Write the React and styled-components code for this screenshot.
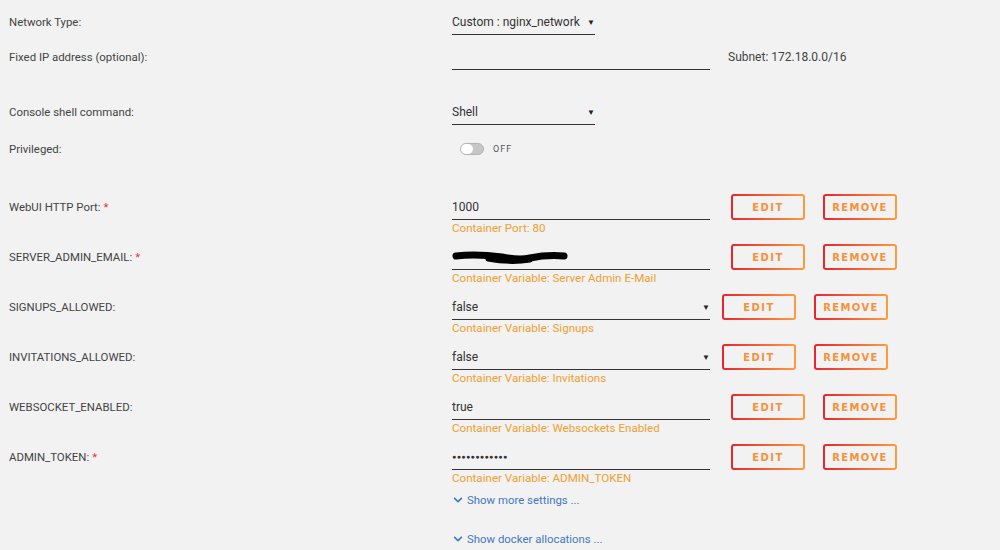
import styled, { createGlobalStyle } from "styled-components";
import { FaChevronDown } from "react-icons/fa";

// Container settings form: label column on the left, controls + action buttons on the right.

const GlobalStyle = createGlobalStyle`
  html, body {
    margin: 0;
    background: #f2f2f2;
  }
  body {
    font-family: Roboto, "Liberation Sans", Arial, sans-serif;
    font-size: 12px;
    color: #333;
  }
`;

const Page = styled.div`
  width: 1000px;
  height: 550px;
  overflow: hidden;
  padding: 10px 0 0 9px;
  box-sizing: border-box;
`;

// one form line: label + control area
const Row = styled.div`
  display: grid;
  grid-template-columns: 443px auto;
  align-items: start;
  margin-bottom: ${(p) => p.$mb || 0}px;
`;

const Label = styled.div`
  height: 24px;
  line-height: 24px;
  color: #444;
  font-size: 11.4px;
`;

const Required = styled.span`
  color: #e33;
  margin-left: 3px;
`;

const Controls = styled.div`
  display: flex;
  align-items: flex-start;
`;

const Field = styled.div`
  display: flex;
  flex-direction: column;
  width: ${(p) => p.$w || 258}px;
`;

const Input = styled.div`
  height: 24px;
  line-height: 24px;
  border-bottom: 1px solid #333;
  color: #333;
  display: flex;
  align-items: center;
  justify-content: space-between;
`;

const Arrow = styled.span`
  font-size: 8px;
  color: #222;
  margin-top: 1px;
`;

const Hint = styled.div`
  color: #f0a030;
  height: 14px;
  line-height: 14px;
  margin-top: 1px;
  font-size: 11.6px;
`;

const Subnet = styled.div`
  margin-left: 18px;
  line-height: 24px;
  color: #444;
`;

const Dots = styled.span`
  font-size: 7px;
  letter-spacing: 0.4px;
  color: #333;
`;

const Toggle = styled.div`
  display: flex;
  align-items: center;
  height: 24px;
  padding-left: 8px;
`;

const Track = styled.div`
  width: 24px;
  height: 12px;
  border-radius: 6px;
  background: #c6c6c6;
  box-sizing: border-box;
  border: 1px solid #b4b4b4;
  display: flex;
`;

const Knob = styled.div`
  width: 12px;
  height: 10px;
  border-radius: 5px;
  background: #fff;
`;

const ToggleText = styled.span`
  margin-left: 9px;
  font-size: 9px;
  letter-spacing: 1px;
  color: #555;
`;

const Actions = styled.div`
  display: flex;
  gap: 18px;
  margin-left: ${(p) => p.$ml}px;
  margin-top: -1px;
`;

const ActionButton = styled.button`
  width: 74px;
  height: 26px;
  box-sizing: border-box;
  padding: 0;
  border: 2px solid transparent;
  border-radius: 3px;
  background: linear-gradient(#f2f2f2, #f2f2f2) padding-box,
    linear-gradient(to right, #e6262e, #ff9b3e) border-box;
  color: #f7913a;
  font-family: "DejaVu Sans", sans-serif;
  font-weight: bold;
  font-size: 10px;
  letter-spacing: 1.4px;
  cursor: pointer;
`;

const MoreLink = styled.a`
  display: flex;
  align-items: center;
  gap: 4px;
  color: #4378c0;
  height: 16px;
  margin-left: 444px;
  margin-top: ${(p) => p.$mt || 0}px;
  font-size: 11.4px;
  text-decoration: none;
  svg {
    font-size: 10px;
  }
`;

const Scribble = () => (
  <svg width="116" height="14" viewBox="0 0 116 14">
    <path
      d="M4 6 C 20 4, 35 5, 50 7 C 60 9, 70 10, 78 8 C 88 6, 100 5, 112 6"
      stroke="#000"
      strokeWidth="7"
      strokeLinecap="round"
      fill="none"
    />
    <path d="M36 9 C 52 12, 66 12, 78 10" stroke="#000" strokeWidth="5" strokeLinecap="round" fill="none" />
  </svg>
);

const envRows = [
  { label: "WebUI HTTP Port:", required: true, value: "1000", hint: "Container Port: 80" },
  { label: "SERVER_ADMIN_EMAIL:", required: true, value: <Scribble />, hint: "Container Variable: Server Admin E-Mail" },
  { label: "SIGNUPS_ALLOWED:", value: "false", select: true, hint: "Container Variable: Signups" },
  { label: "INVITATIONS_ALLOWED:", value: "false", select: true, hint: "Container Variable: Invitations" },
  { label: "WEBSOCKET_ENABLED:", value: "true", hint: "Container Variable: Websockets Enabled" },
  { label: "ADMIN_TOKEN:", required: true, value: <Dots>{"●".repeat(12)}</Dots>, hint: "Container Variable: ADMIN_TOKEN" },
];

export default function App() {
  return (
    <Page>
      <GlobalStyle />
      <Row $mb={10}>
        <Label>Network Type:</Label>
        <Field $w={143}>
          <Input>
            Custom : nginx_network <Arrow>▼</Arrow>
          </Input>
        </Field>
      </Row>
      <Row $mb={30}>
        <Label>Fixed IP address (optional):</Label>
        <Controls>
          <Field>
            <Input />
          </Field>
          <Subnet>Subnet: 172.18.0.0/16</Subnet>
        </Controls>
      </Row>
      <Row $mb={12}>
        <Label>Console shell command:</Label>
        <Field $w={143}>
          <Input>
            Shell <Arrow>▼</Arrow>
          </Input>
        </Field>
      </Row>
      <Row $mb={34}>
        <Label>Privileged:</Label>
        <Toggle>
          <Track>
            <Knob />
          </Track>
          <ToggleText>OFF</ToggleText>
        </Toggle>
      </Row>
      {envRows.map((r) => (
        <Row key={r.label} $mb={10}>
          <Label>
            {r.label}
            {r.required && <Required>*</Required>}
          </Label>
          <Controls>
            <Field>
              <Input>
                {r.value}
                {r.select && <Arrow>▼</Arrow>}
              </Input>
              <Hint>{r.hint}</Hint>
            </Field>
            <Actions $ml={r.select ? 12 : 21}>
              <ActionButton>EDIT</ActionButton>
              <ActionButton>REMOVE</ActionButton>
            </Actions>
          </Controls>
        </Row>
      ))}
      <MoreLink $mt={-3}>
        <FaChevronDown />
        Show more settings ...
      </MoreLink>
      <MoreLink $mt={23}>
        <FaChevronDown />
        Show docker allocations ...
      </MoreLink>
    </Page>
  );
}
